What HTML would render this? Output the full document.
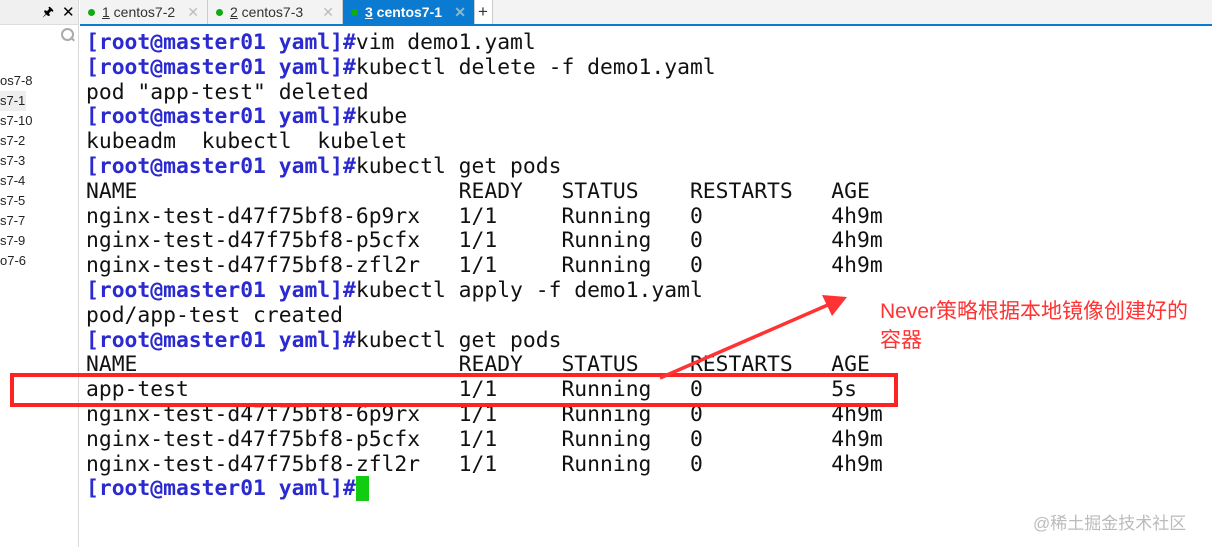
<!DOCTYPE html><html><head><meta charset="utf-8"><style>
body{margin:0;width:1212px;height:547px;background:#fff;position:relative;overflow:hidden;font-family:"Liberation Sans","Noto Sans CJK SC",sans-serif}
.left{position:absolute;left:0;top:0;width:78px;height:547px;border-right:1px solid #d8d8d8;background:#fff}
.lh{height:24px;background:#f0f0f0;border-bottom:1px solid #ddd;position:relative;font-size:13px}
.li{position:absolute;left:0;font-size:13px;color:#222;height:20px;line-height:20px;width:78px}
.tabs{position:absolute;left:80px;top:0;width:1132px;height:24px;background:#f3f3f3;border-bottom:2px solid #0a7bd0}
.tab{position:absolute;top:0;height:24px;line-height:24px;font-size:14px;color:#333;border-right:1px solid #ccc;box-sizing:border-box;padding-left:8px}
.tab .d{display:inline-block;width:7px;height:7px;border-radius:50%;background:#1a1;margin-right:7px;vertical-align:1px}
.tab .x{position:absolute;right:8px;color:#bbb}
.term{position:absolute;left:86px;top:31px;font-family:"DejaVu Sans Mono",monospace;font-size:21.35px;line-height:24.8px;white-space:pre;color:#111}
.p{color:#2a2ad0;font-weight:bold}
</style></head><body>
<div class="left"><div class="lh"><span style="position:absolute;left:42px;top:3px">&#x1F588;</span><span style="position:absolute;left:62px;top:3px;font-size:15px">✕</span></div>
<div style="position:absolute;left:61px;top:28px;width:9px;height:9px;border:2px solid #aaa;border-radius:50%"></div>
<div style="position:absolute;left:70px;top:38px;width:5px;height:2px;background:#aaa;transform:rotate(45deg)"></div>
<div class="li" style="top:71px">os7-8</div><div class="li" style="top:91px;background:#eee;width:26px">s7-1</div>
<div class="li" style="top:111px">s7-10</div><div class="li" style="top:131px">s7-2</div><div class="li" style="top:151px">s7-3</div><div class="li" style="top:171px">s7-4</div><div class="li" style="top:191px">s7-5</div><div class="li" style="top:211px">s7-7</div><div class="li" style="top:231px">s7-9</div><div class="li" style="top:251px">o7-6</div></div>
<div class="tabs">
<div class="tab" style="left:0;width:128px"><span class="d"></span><u>1</u> centos7-2<span class="x">✕</span></div>
<div class="tab" style="left:128px;width:135px"><span class="d"></span><u>2</u> centos7-3<span class="x">✕</span></div>
<div class="tab" style="left:263px;width:132px;background:#0a7bd0;color:#fff;font-weight:bold"><span class="d"></span><u>3</u> centos7-1<span class="x" style="color:#8bc">✕</span></div>
<div class="tab" style="left:395px;width:18px;padding-left:3px;background:#fff;font-size:17px">+</div></div>
<div class="term"><span class="p">[root@master01 yaml]#</span>vim demo1.yaml
<span class="p">[root@master01 yaml]#</span>kubectl delete -f demo1.yaml
pod "app-test" deleted
<span class="p">[root@master01 yaml]#</span>kube
kubeadm  kubectl  kubelet
<span class="p">[root@master01 yaml]#</span>kubectl get pods
NAME                         READY   STATUS    RESTARTS   AGE
nginx-test-d47f75bf8-6p9rx   1/1     Running   0          4h9m
nginx-test-d47f75bf8-p5cfx   1/1     Running   0          4h9m
nginx-test-d47f75bf8-zfl2r   1/1     Running   0          4h9m
<span class="p">[root@master01 yaml]#</span>kubectl apply -f demo1.yaml
pod/app-test created
<span class="p">[root@master01 yaml]#</span>kubectl get pods
NAME                         READY   STATUS    RESTARTS   AGE
app-test                     1/1     Running   0          5s
nginx-test-d47f75bf8-6p9rx   1/1     Running   0          4h9m
nginx-test-d47f75bf8-p5cfx   1/1     Running   0          4h9m
nginx-test-d47f75bf8-zfl2r   1/1     Running   0          4h9m
<span class="p">[root@master01 yaml]#</span><span style="background:#1c1">&#160;</span></div>
<div style="position:absolute;left:10px;top:373px;width:880px;height:26px;border:4px solid #f22"></div>
<svg style="position:absolute;left:0;top:0" width="1212" height="547"><line x1="660" y1="378" x2="830" y2="304" stroke="#f33" stroke-width="3.5"/><polygon points="847,297 822,295 832,316" fill="#f33"/></svg>
<div style="position:absolute;left:880px;top:297px;color:#f33;font-size:21px;line-height:29px">Never策略根据本地镜像创建好的<br>容器</div>
<div style="position:absolute;left:1033px;top:509px;color:#bbb;font-size:17px">@稀土掘金技术社区</div>
</body></html>
